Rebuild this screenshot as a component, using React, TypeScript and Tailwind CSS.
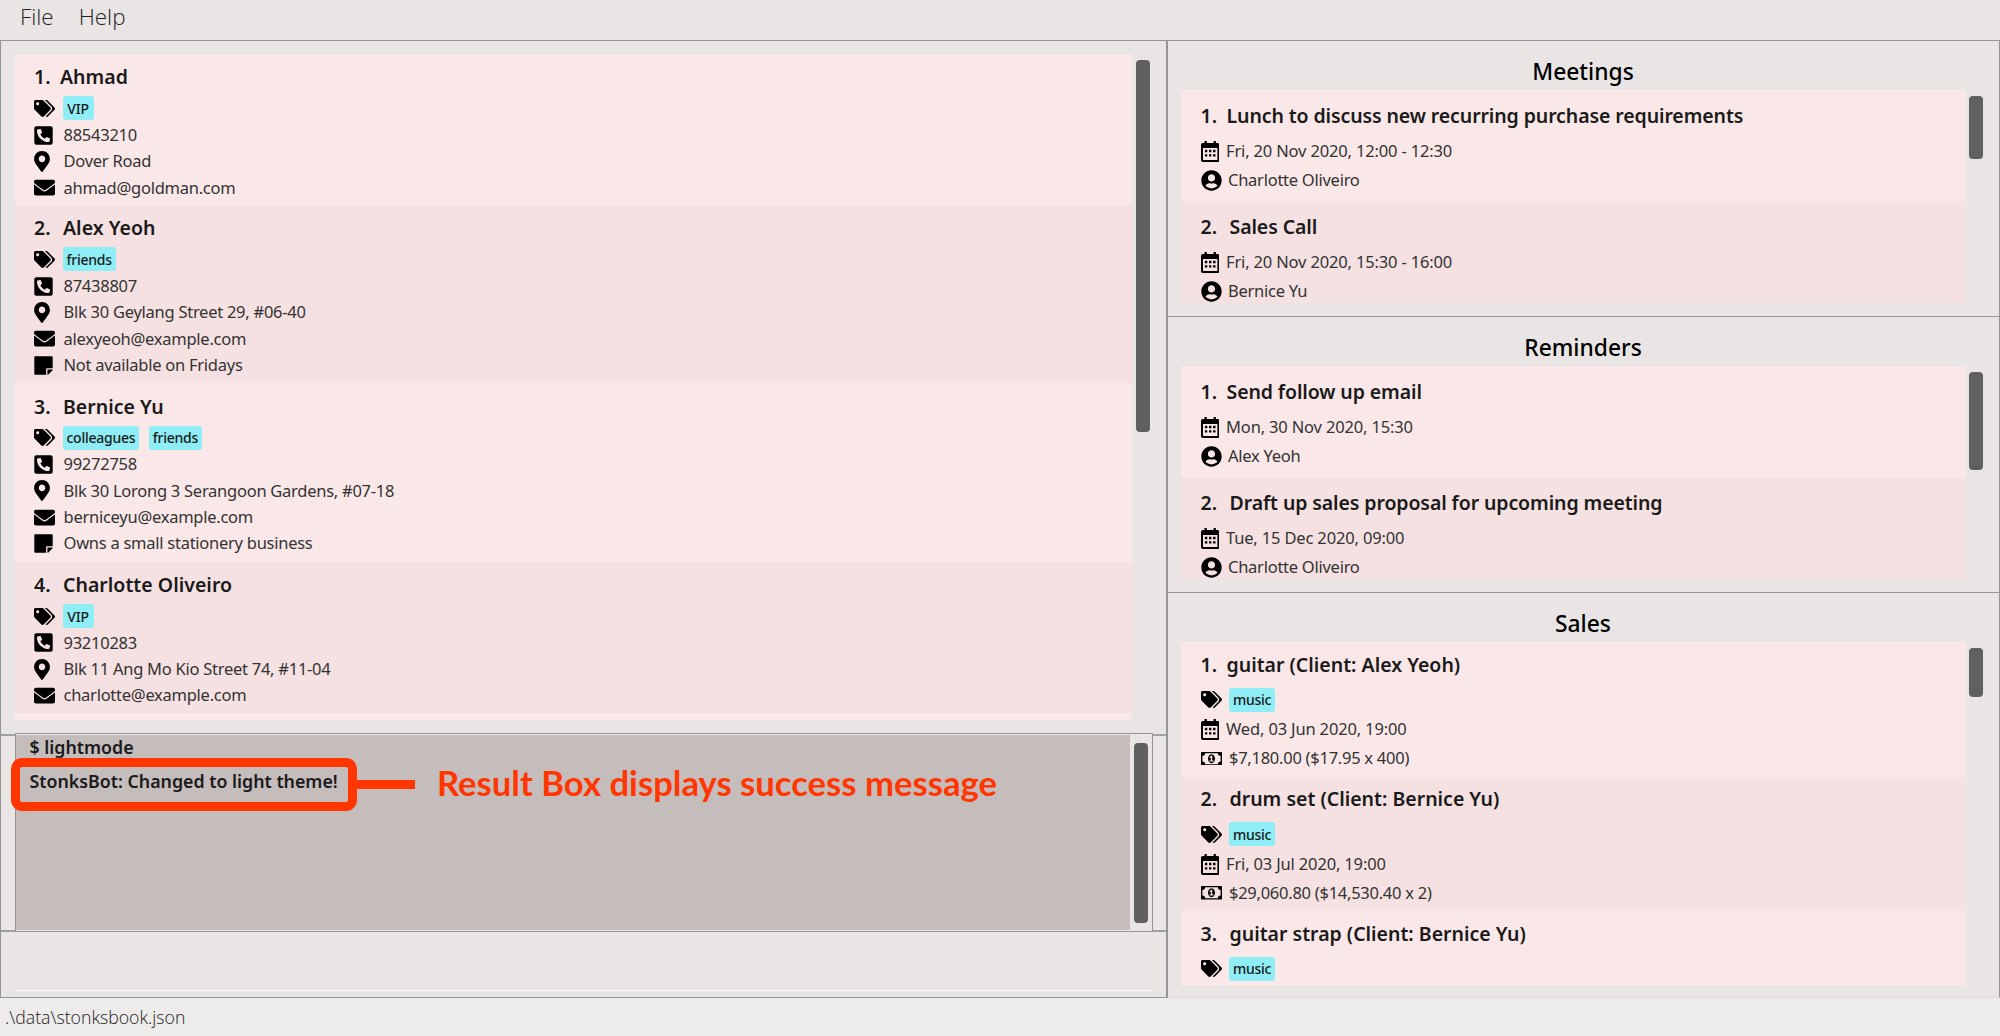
import React from "react";
import { FaTags, FaPhoneSquareAlt, FaMapMarkerAlt, FaEnvelope, FaStickyNote, FaUserCircle } from "react-icons/fa";

type IconName = "tags" | "phone" | "pin" | "mail" | "note" | "calendar" | "user" | "money";

function CalendarIcon() {
  return (
    <svg viewBox="0 0 18.4 21" className="h-[21px] w-[18.4px]" fill="none">
      <path d="M3.5 0h2.300v3h-2.300zM12.600 0h2.300v3h-2.300z" fill="black" />
      <path fillRule="evenodd" fill="black" d="M1.8 2h14.8a1.8 1.8 0 0 1 1.8 1.8v15.4a1.8 1.8 0 0 1-1.8 1.8H1.8a1.8 1.8 0 0 1-1.8-1.8V3.8a1.8 1.8 0 0 1 1.8-1.8zM2 6.9v12.100h14.400V6.9z" />
      <path fill="black" d="M3.9 8.8h2.4v2.4H3.9zM8 8.8h2.4v2.4H8zM12.1 8.8h2.4v2.4h-2.4zM3.9 13.2h2.4v2.4H3.9zM8 13.2h2.4v2.4H8zM12.1 13.2h2.4v2.4h-2.4z" />
    </svg>
  );
}

function MoneyIcon() {
  return (
    <svg viewBox="0 0 1920 1280" preserveAspectRatio="none" className="h-[13.5px] w-[21px]">
      <path
        fill="black"
        fillRule="evenodd"
        d="M768 896h384v-96h-128v-448h-114l-148 137 77 80q42-37 55-57h2v288h-128v96zm512-256q0 70-21 142t-59.5 134-101.5 101-138 39-138-39-101.5-101-59.5-134-21-142 21-142 59.5-134 101.5-101 138-39 138 39 101.5 101 59.5 134 21 142zm512 256v-512q-106 0-181-75t-75-181h-1152q0 106-75 181t-181 75v512q106 0 181 75t75 181h1152q0-106 75-181t181-75zm128-832v1152q0 26-19 45t-45 19h-1792q-26 0-45-19t-19-45v-1152q0-26 19-45t45-19h1792q26 0 45 19t19 45z"
      />
    </svg>
  );
}

const icons: Record<IconName, React.ReactNode> = {
  tags: <FaTags className="h-[21px] w-[21px]" />,
  phone: <FaPhoneSquareAlt className="h-[21px] w-[19px]" />,
  pin: <FaMapMarkerAlt className="h-[21px] w-[16px]" />,
  mail: <FaEnvelope className="h-[21px] w-[21px]" />,
  note: <FaStickyNote className="h-[21px] w-[19px]" />,
  calendar: <CalendarIcon />,
  user: <FaUserCircle className="h-[21px] w-[21px]" />,
  money: <MoneyIcon />,
};

function Heading({ n, text, className, tracking }: { n: number; text: string; className: string; tracking: string }) {
  return (
    <div className={`flex items-center text-[19.5px] font-semibold whitespace-pre text-[#1a1a1a] ${className}`}>
      <span className={n === 1 ? "w-[26px]" : "w-[29px]"}>{n}.</span>
      <span className={tracking}>{text}</span>
    </div>
  );
}

function Tags({ tags, className }: { tags: string[]; className: string }) {
  return (
    <div className={`flex items-center ${className}`}>
      <span className="w-[28.5px] text-black">{icons.tags}</span>
      <div className="flex gap-[9.5px]">
        {tags.map((t) => (
          <span key={t} className="flex h-6 min-w-[31px] items-center justify-center rounded-[3px] bg-[#8eedf5] px-1 text-[14px] font-medium tracking-[-0.25px] text-[#1a1a1a]">
            {t}
          </span>
        ))}
      </div>
    </div>
  );
}

function Row({ icon, text, className, gutter = "w-[29.5px]", tracking = "tracking-[-0.26px]" }: { icon: IconName; text: string; className: string; gutter?: string; tracking?: string }) {
  return (
    <div className={`flex items-center text-[16.5px] whitespace-pre text-[#333] ${className}`}>
      <span className={`text-black ${gutter}`}>{icons[icon]}</span>
      <span className={tracking}>{text}</span>
    </div>
  );
}

interface Person {
  name: string;
  tags: string[];
  rows: [IconName, string][];
}

const people: Person[] = [
  { name: "Ahmad", tags: ["VIP"], rows: [["phone", "88543210"], ["pin", "Dover Road"], ["mail", "ahmad@goldman.com"]] },
  { name: "Alex Yeoh", tags: ["friends"], rows: [["phone", "87438807"], ["pin", "Blk 30 Geylang Street 29, #06-40"], ["mail", "alexyeoh@example.com"], ["note", "Not available on Fridays"]] },
  { name: "Bernice Yu", tags: ["colleagues", "friends"], rows: [["phone", "99272758"], ["pin", "Blk 30 Lorong 3 Serangoon Gardens, #07-18"], ["mail", "berniceyu@example.com"], ["note", "Owns a small stationery business"]] },
  { name: "Charlotte Oliveiro", tags: ["VIP"], rows: [["phone", "93210283"], ["pin", "Blk 11 Ang Mo Kio Street 74, #11-04"], ["mail", "charlotte@example.com"]] },
];

const shade = (i: number) => (i % 2 ? "bg-[#f5e1e1]" : "bg-[#fae8e8]");

function PersonCard({ person, i }: { person: Person; i: number }) {
  return (
    <div className={`shrink-0 pt-[5.4px] pl-[19px] ${person.rows.length === 4 ? "h-[178.4px]" : "h-[151px]"} ${shade(i)}`}>
      <Heading n={i + 1} text={person.name} className="h-[35px]" tracking="tracking-[0.02px]" />
      <Tags tags={person.tags} className="mt-[0.6px] h-[27px]" />
      {person.rows.map(([icon, text]) => (
        <Row key={text} icon={icon} text={text} className="h-[26.4px]" />
      ))}
    </div>
  );
}

function EventCard({ title, date, who, i }: { title: string; date: string; who: string; i: number }) {
  return (
    <div className={`h-[111px] shrink-0 pt-[8px] pl-[19.5px] ${shade(i)}`}>
      <Heading n={i + 1} text={title} className="h-[35px]" tracking="tracking-[-0.1px]" />
      <Row icon="calendar" text={date} className="mt-px h-[34px]" gutter="w-[25.5px]" tracking="tracking-[-0.16px]" />
      <Row icon="user" text={who} className="h-[25px]" gutter="w-[27.5px]" />
    </div>
  );
}

function SaleCard({ title, date, amount, i }: { title: string; date?: string; amount?: string; i: number }) {
  return (
    <div className={`h-[134.5px] shrink-0 pt-[5px] pl-[19.5px] ${shade(i)}`}>
      <Heading n={i + 1} text={title} className="h-[35px]" tracking="tracking-[0px]" />
      <Tags tags={["music"]} className="mt-px h-[33px]" />
      {date && <Row icon="calendar" text={date} className="h-[27px]" gutter="w-[25.5px]" tracking="tracking-[-0.16px]" />}
      {amount && <Row icon="money" text={amount} className="h-[31px]" gutter="w-[28.5px]" />}
    </div>
  );
}

function Panel({ title, height, listHeight, thumb, children }: { title: string; height: string; listHeight: string; thumb: string; children: React.ReactNode }) {
  return (
    <section className={`shrink-0 pl-[13px] ${height}`}>
      <h2 className="flex h-[49px] w-[804px] items-end justify-center pb-[2px] text-[22.8px] leading-[32px] font-medium text-black">{title}</h2>
      <div className="flex gap-[3px]">
        <div className={`flex w-[785px] flex-col overflow-hidden ${listHeight}`}>{children}</div>
        <div className={`mt-[6px] w-[14px] rounded-[4px] bg-[#606060] ${thumb}`} />
      </div>
    </section>
  );
}

export default function App() {
  return (
    <div className="flex h-[1036px] w-[2000px] flex-col overflow-hidden bg-[#e8e5e4] font-['Noto_Sans','Open_Sans',sans-serif]">
      <nav className="flex h-[41px] shrink-0 items-start gap-[25px] border-b border-[#939695] pl-[20px] font-['Open_Sans',sans-serif] text-[22.4px] leading-[33px] font-light text-[#222]">
        <span>File</span>
        <span>Help</span>
      </nav>
      <div className="flex h-[957px] shrink-0">
        <main className="flex w-[1168px] flex-col border-r-2 border-l border-[#939695]">
          <div className="flex h-[692px] shrink-0 gap-[4px] pt-[13px] pl-[14px]">
            <div className="flex h-[666px] w-[1117px] flex-col overflow-hidden">
              {people.map((p, i) => (
                <PersonCard key={p.name} person={p} i={i} />
              ))}
              <div className="h-[8px] bg-[#fae8e8]" />
            </div>
            <div className="mt-[6px] h-[372px] w-[14px] rounded-[4px] bg-[#606060]" />
          </div>
          <div className="flex h-[199px] shrink-0">
            <div className="mt-px w-[14px] border-y-2 border-[#a0a2a1]" />
            <div className="relative flex w-[1138px] border border-[#939695]">
              <div className="mt-px mb-px w-[1114px] bg-[#c5bcbc] pl-[13.5px] text-[17.8px] font-semibold whitespace-pre text-[#1a1a1a]">
                <div className="h-[27px] leading-[25px]">$ lightmode</div>
                <div className="h-[38px] leading-[38px]">StonksBot: Changed to light theme!</div>
              </div>
              <div className="mt-[9px] ml-[4px] h-[180px] w-[14px] rounded-[4px] bg-[#606060]" />
              <div className="absolute top-[24px] left-[-5px] h-[53px] w-[346px] rounded-[11px] border-[9px] border-[#ff3600]" />
              <div className="absolute top-[46px] left-[340px] h-[9px] w-[59px] bg-[#ff3600]" />
              <div className="absolute top-[25px] left-[421px] font-['Lato',sans-serif] text-[34.65px] leading-[48px] font-bold whitespace-pre text-[#ff3600]">
                Result Box displays success message
              </div>
            </div>
            <div className="mt-px w-[13px] border-y-2 border-[#a0a2a1]" />
          </div>
          <div className="flex-1 border-b border-[#939695] pt-[7px] pl-[14px]">
            <div className="h-[52px] w-[1138px] border border-[#efe4e4] border-b-white" />
          </div>
        </main>
        <aside className="flex w-[832px] flex-col border-r border-b border-r-[#939695] border-b-[#dcdad9]">
          <Panel title="Meetings" height="h-[276px] border-b border-[#939695]" listHeight="h-[213px]" thumb="h-[63px]">
            <EventCard i={0} title="Lunch to discuss new recurring purchase requirements" date="Fri, 20 Nov 2020, 12:00 - 12:30" who="Charlotte Oliveiro" />
            <EventCard i={1} title="Sales Call" date="Fri, 20 Nov 2020, 15:30 - 16:00" who="Bernice Yu" />
          </Panel>
          <Panel title="Reminders" height="h-[276px] border-b border-[#939695]" listHeight="h-[213px]" thumb="h-[98px]">
            <EventCard i={0} title="Send follow up email" date="Mon, 30 Nov 2020, 15:30" who="Alex Yeoh" />
            <EventCard i={1} title="Draft up sales proposal for upcoming meeting" date="Tue, 15 Dec 2020, 09:00" who="Charlotte Oliveiro" />
          </Panel>
          <Panel title="Sales" height="h-[404px]" listHeight="h-[344px]" thumb="h-[49px]">
            <SaleCard i={0} title="guitar (Client: Alex Yeoh)" date="Wed, 03 Jun 2020, 19:00" amount="$7,180.00 ($17.95 x 400)" />
            <SaleCard i={1} title="drum set (Client: Bernice Yu)" date="Fri, 03 Jul 2020, 19:00" amount="$29,060.80 ($14,530.40 x 2)" />
            <SaleCard i={2} title="guitar strap (Client: Bernice Yu)" />
          </Panel>
        </aside>
      </div>
      <footer className="flex h-[38px] shrink-0 items-center bg-[#edecea] pt-px pl-[5px] font-['Open_Sans',sans-serif] text-[17.7px] font-light text-[#222]">
        .\data\stonksbook.json
      </footer>
    </div>
  );
}
